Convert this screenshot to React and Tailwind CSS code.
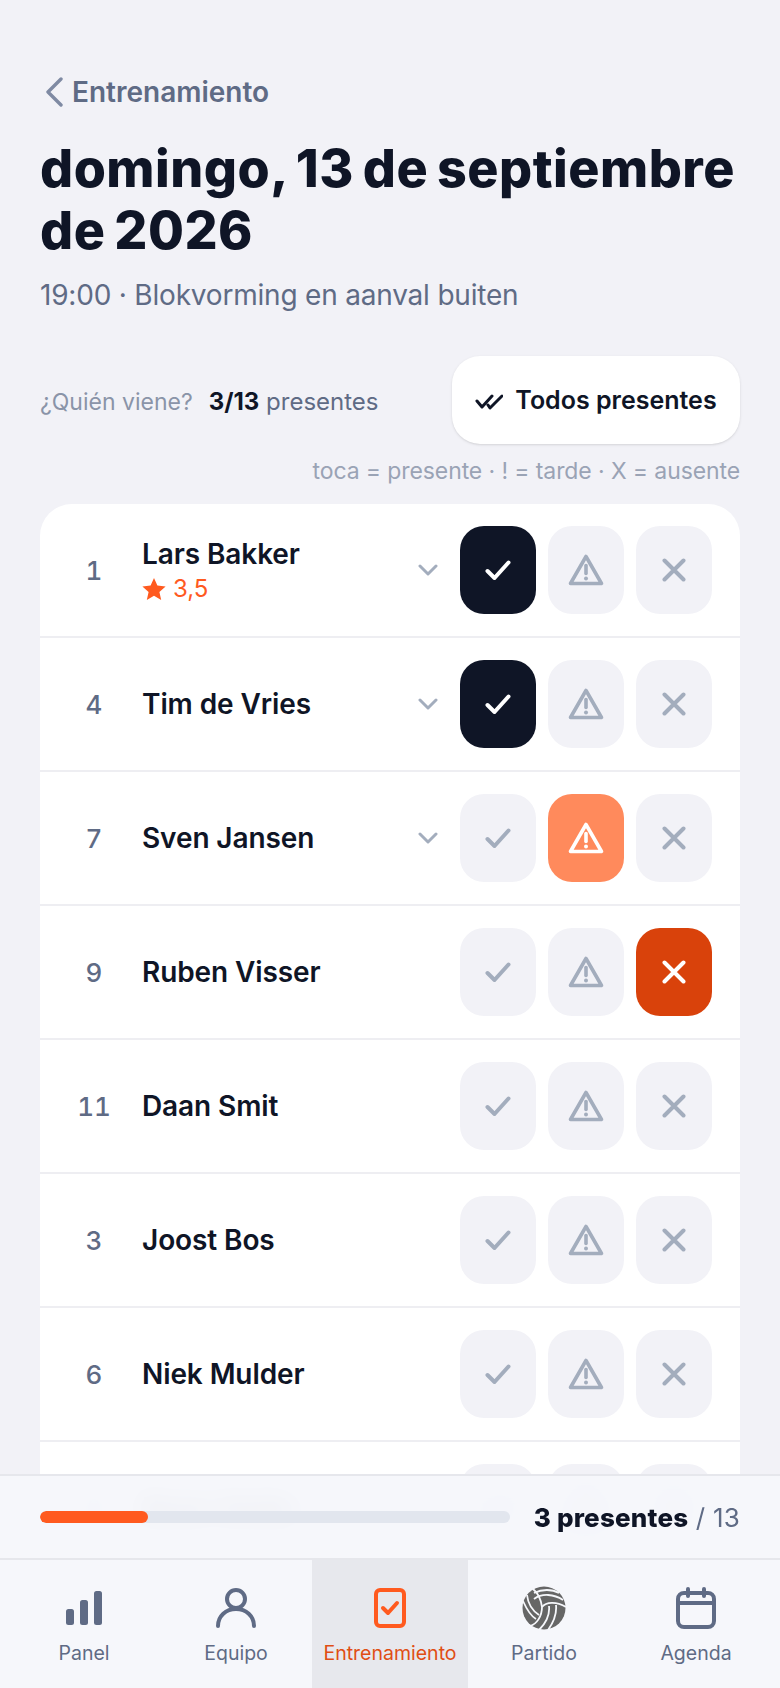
const players = [
  { num: 1, name: "Lars Bakker", rating: "3,5", open: true, status: "here" },
  { num: 4, name: "Tim de Vries", open: true, status: "here" },
  { num: 7, name: "Sven Jansen", open: true, status: "late" },
  { num: 9, name: "Ruben Visser", status: "away" },
  { num: 11, name: "Daan Smit" },
  { num: 3, name: "Joost Bos" },
  { num: 6, name: "Niek Mulder" },
  { num: 8, name: "Bram Smits" },
];

const CheckIcon = () => (
  <svg width="26" height="20" viewBox="0 0 26 20" fill="none" stroke="currentColor" strokeWidth="4" strokeLinecap="round" strokeLinejoin="round">
    <path d="M2.5 11 L9.5 18 L23.5 2.5" />
  </svg>
);

const AlertIcon = () => (
  <svg width="36" height="32" viewBox="0 0 36 32" fill="none" stroke="currentColor" strokeWidth="3.6" strokeLinejoin="round" strokeLinecap="round">
    <path d="M18 2.5 L33.5 29.5 H2.5 Z" />
    <path d="M18 11.5 V19.5" strokeWidth="3.6" />
    <circle cx="18" cy="24.5" r="2" fill="currentColor" stroke="none" />
  </svg>
);

const CrossIcon = () => (
  <svg width="24" height="24" viewBox="0 0 24 24" fill="none" stroke="currentColor" strokeWidth="4" strokeLinecap="round">
    <path d="M2.5 2.5 L21.5 21.5 M21.5 2.5 L2.5 21.5" />
  </svg>
);

const Chevron = () => (
  <svg width="20" height="12" viewBox="0 0 20 12" fill="none" stroke="currentColor" strokeWidth="3" strokeLinecap="round" strokeLinejoin="round" className="text-[#a3adbd]">
    <path d="M2 2 L10 10 L18 2" />
  </svg>
);

const Volleyball = () => (
  <svg width="44" height="44" viewBox="0 0 44 44">
    <circle cx="22" cy="22" r="21.5" fill="#666666" />
    <g fill="none" stroke="#f6f7fb" strokeWidth="1.8">
      <path d="M20 21 C24 16 34 15 44 21" />
      <path d="M12 7 C20 3 30 3 37 7" />
      <path d="M12 13 C20 7 32 8 41 14" />
      <path d="M20 21 C19 14 16 7 11 3" />
      <path d="M5 9 C6 18 11 25 17 29" />
      <path d="M1 15 C5 24 9 30 14 33" />
      <path d="M20 21 C20 30 15 38 8 40" />
      <path d="M27 20 C28 29 24 37 17 44" />
      <path d="M34 19 C35 28 31 37 26 44" />
    </g>
  </svg>
);

const StatusButton = ({ active, activeClass, children }) => (
  <button className={`flex h-[88px] w-[76px] items-center justify-center rounded-[24px] ${active ? activeClass : "bg-[#f2f2f7] text-[#a3adbd]"}`}>
    {children}
  </button>
);

const Row = ({ player }) => (
  <div className="flex h-[134px] items-center border-b-2 border-[#eeeef2] pr-[28px]">
    <div className="ml-[24px] mr-[18px] w-[60px] text-center text-[26px] font-medium text-[#5f6b85] tabular-nums">{player.num}</div>
    <div className="flex-1">
      <div className="text-[28px] leading-[36px] font-semibold tracking-[-0.1px] text-[#0f1526]">{player.name}</div>
      {player.rating && (
        <div className="mt-[2px] flex items-center gap-[7px] text-[24px] leading-[30px] text-[#ff5a1f]">
          <svg width="24" height="24" viewBox="0 0 24 24" fill="currentColor"><path d="M12 1 L15.4 8.6 L23.6 9.4 L17.4 14.9 L19.2 23 L12 18.8 L4.8 23 L6.6 14.9 L0.4 9.4 L8.6 8.6 Z" /></svg>
          {player.rating}
        </div>
      )}
    </div>
    {player.open && <div className="mr-[22px]"><Chevron /></div>}
    <div className="flex gap-[12px]">
      <StatusButton active={player.status === "here"} activeClass="bg-[#0f1526] text-white"><CheckIcon /></StatusButton>
      <StatusButton active={player.status === "late"} activeClass="bg-[#ff8a5c] text-white"><AlertIcon /></StatusButton>
      <StatusButton active={player.status === "away"} activeClass="bg-[#d9420b] text-white"><CrossIcon /></StatusButton>
    </div>
  </div>
);

const NavItem = ({ label, active, children }) => (
  <div className={`flex flex-col items-center pt-[26px] ${active ? "w-[156px] bg-[#e7e8ed] text-[#e04e14]" : "w-[152px] text-[#5f6b85]"}`}>
    <div className="flex h-[44px] items-center justify-center">{children}</div>
    <div className="mt-[9px] text-[19.5px] leading-[28px]">{label}</div>
  </div>
);

const App = () => {
  return (
    <div className="relative h-[1688px] overflow-hidden bg-[#f2f2f7] font-['Inter',sans-serif]">
      <div className="px-[40px] pt-[72px]">
        <div className="flex items-center gap-[8px] text-[28px] leading-[40px] font-semibold text-[#5f6b85]">
          <svg width="20" height="30" viewBox="0 0 20 30" fill="none" stroke="#7f8aa3" strokeWidth="3.4" strokeLinecap="round" strokeLinejoin="round" className="ml-[4px]">
            <path d="M17 2 L4 15 L17 28" />
          </svg>
          Entrenamiento
        </div>
        <h1 className="mt-[26px] text-[52px] leading-[62px] font-extrabold tracking-[0.5px] [word-spacing:-3px] text-[#0f1526]">
          domingo, 13 de septiembre de 2026
        </h1>
        <div className="mt-[13px] text-[28px] leading-[40px] tracking-[-0.2px] text-[#5f6b85]">19:00 · Blokvorming en aanval buiten</div>

        <div className="mt-[41px] flex items-center justify-between">
          <div className="flex items-center gap-[16px] pt-[4px]">
            <span className="text-[23px] text-[#8a94a8]">¿Quién viene?</span>
            <span className="text-[24px] text-[#5f6b85]"><b className="text-[#0f1526]">3/13</b> presentes</span>
          </div>
          <button className="flex h-[88px] w-[288px] items-center justify-center gap-[12px] rounded-[28px] bg-white pt-[2px] text-[25px] font-semibold text-[#0f1526] shadow-sm">
            <svg width="28" height="20" viewBox="0 0 28 20" fill="none" stroke="currentColor" strokeWidth="3" strokeLinecap="round" strokeLinejoin="round">
              <path d="M2 10 L7 16 L17 5 M13 14 L15 17 L27 5" />
            </svg>
            Todos presentes
          </button>
        </div>
        <div className="mt-[10px] text-right text-[23px] leading-[34px] tracking-[-0.1px] text-[#9aa3b5]">toca = presente · ! = tarde · X = ausente</div>

        <div className="mt-[16px] overflow-hidden rounded-t-[32px] bg-white">
          {players.map((player) => (
            <Row key={player.num} player={player} />
          ))}
        </div>
      </div>

      <div className="absolute inset-x-0 bottom-0">
        <div className="flex h-[86px] items-center gap-[24px] border-y-2 border-[#e6e7ec] bg-[#f6f7fb]/95 px-[40px] backdrop-blur-md">
          <div className="h-[12px] flex-1 overflow-hidden rounded-full bg-[#e2e6ee]">
            <div className="h-full rounded-full bg-[#ff5a1f]" style={{ width: `${(3 / 13) * 100}%` }} />
          </div>
          <div className="text-[26px] tracking-[0.2px] text-[#5f6b85]"><b className="font-extrabold text-[#0f1526]">3 presentes</b> / 13</div>
        </div>
        <div className="flex h-[128px] bg-[#f6f7fb] px-[8px]">
          <NavItem label="Panel">
            <svg width="36" height="34" viewBox="0 0 36 34" fill="currentColor">
              <rect x="0" y="18" width="8" height="16" rx="2.5" />
              <rect x="14" y="9" width="8" height="25" rx="2.5" />
              <rect x="28" y="0" width="8" height="34" rx="2.5" />
            </svg>
          </NavItem>
          <NavItem label="Equipo">
            <svg width="40" height="40" viewBox="0 0 40 40" fill="none" stroke="currentColor" strokeWidth="4" strokeLinecap="round">
              <circle cx="20" cy="11" r="9" />
              <path d="M2 38 C2 28 10 21 20 21 C30 21 38 28 38 38" />
            </svg>
          </NavItem>
          <NavItem label="Entrenamiento" active>
            <svg width="32" height="40" viewBox="0 0 32 40" fill="none" stroke="#ff5a1f" strokeWidth="4" strokeLinecap="round" strokeLinejoin="round">
              <rect x="2" y="2" width="28" height="36" rx="4" />
              <path d="M9 20 L14 25 L23 15" />
            </svg>
          </NavItem>
          <NavItem label="Partido">
            <Volleyball />
          </NavItem>
          <NavItem label="Agenda">
            <svg width="40" height="42" viewBox="0 0 40 42" fill="none" stroke="currentColor" strokeWidth="4" strokeLinecap="round" strokeLinejoin="round">
              <rect x="2" y="6" width="36" height="34" rx="6" />
              <path d="M2 16 H38 M12 2 V9 M28 2 V9" />
            </svg>
          </NavItem>
        </div>
      </div>
    </div>
  );
};

export default App;
